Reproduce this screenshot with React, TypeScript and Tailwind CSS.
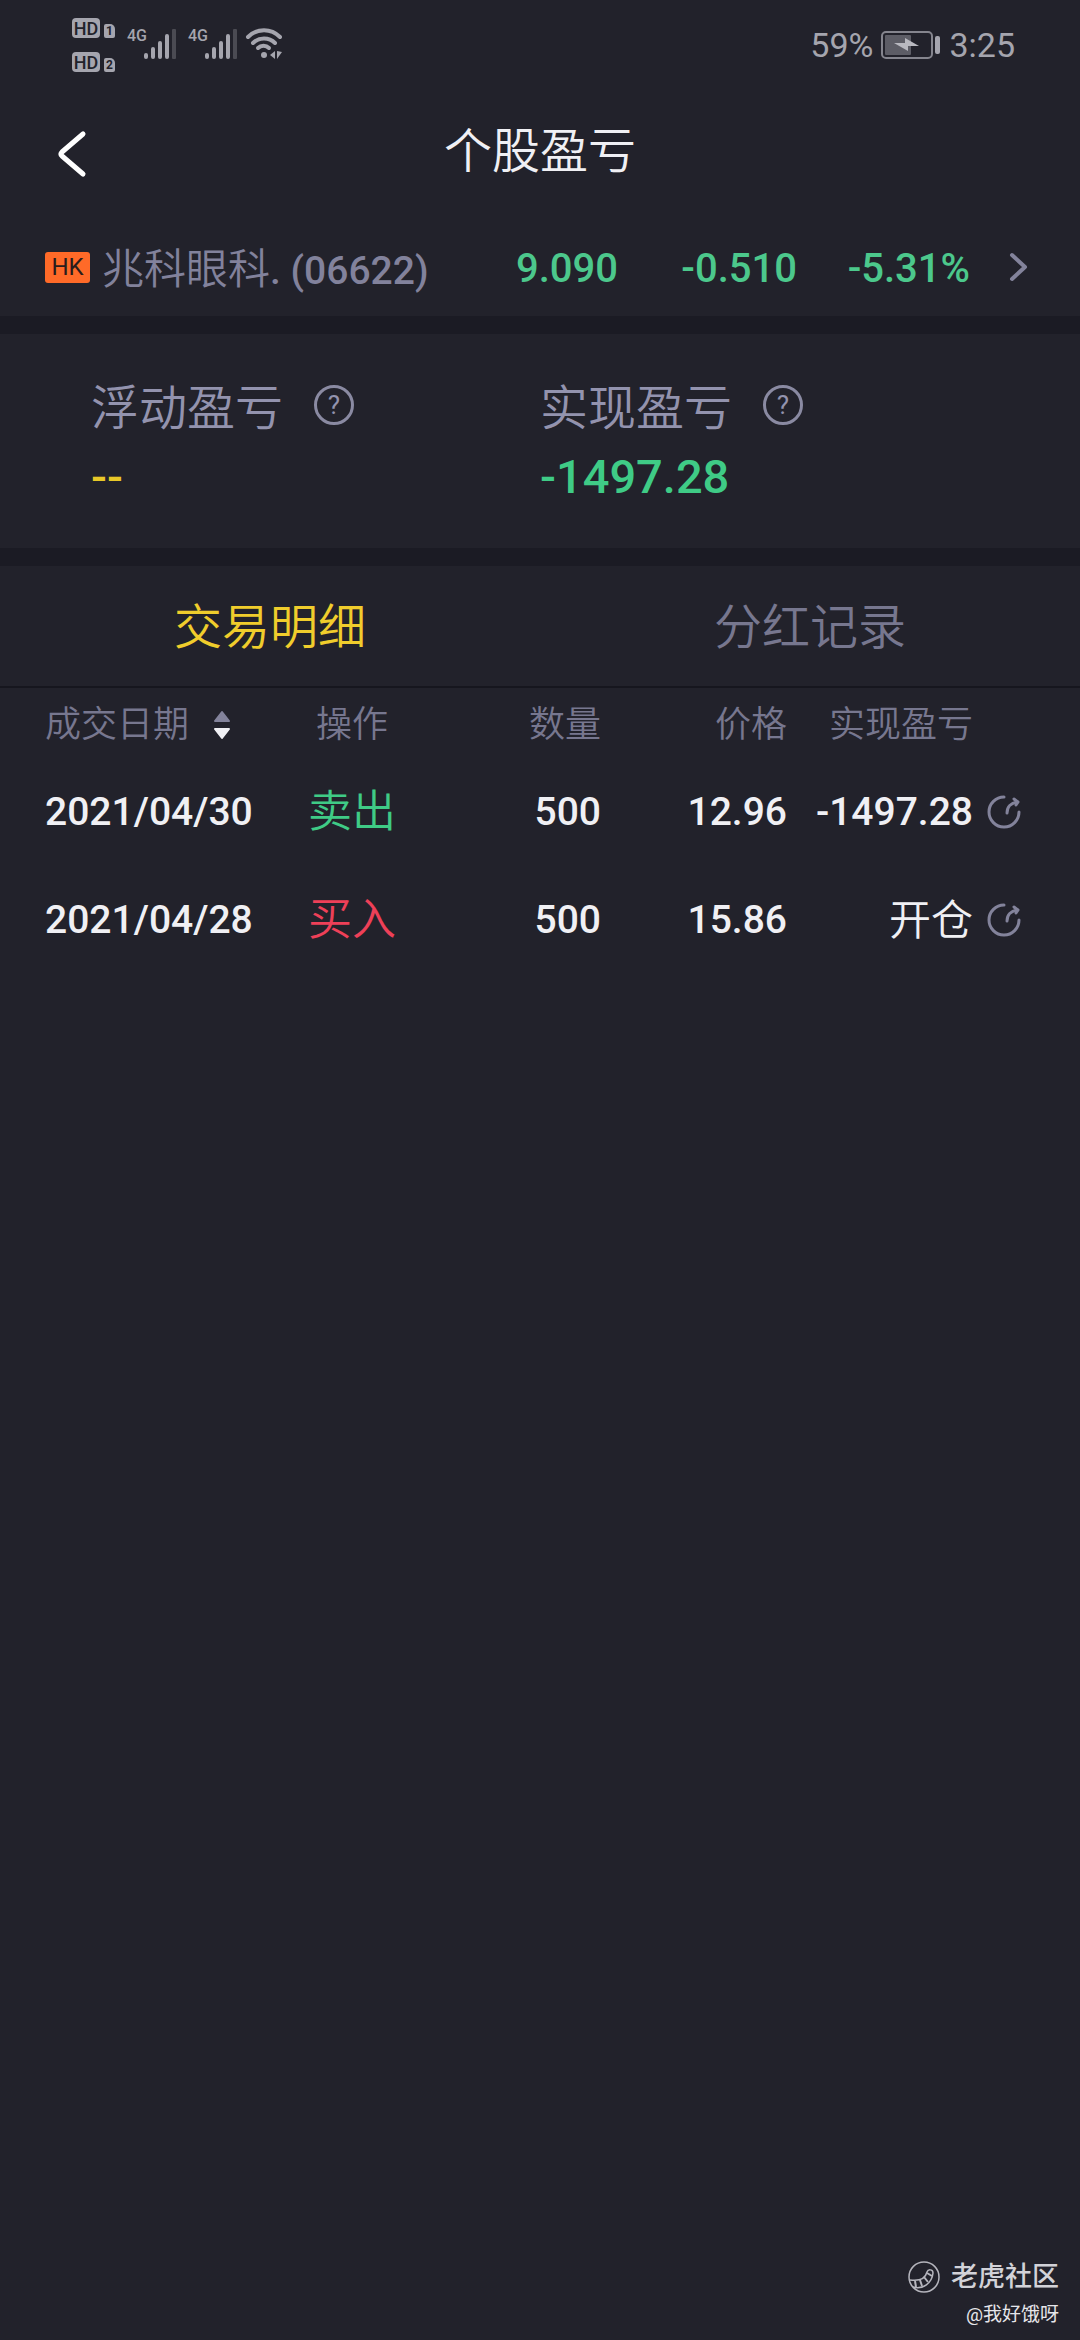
import { useState } from 'react';

type Trade = {
  date: string;
  side: 'buy' | 'sell';
  quantity: number;
  price: string;
  pnl: string;
};

const TRADES: Trade[] = [
  { date: '2021/04/30', side: 'sell', quantity: 500, price: '12.96', pnl: '-1497.28' },
  { date: '2021/04/28', side: 'buy', quantity: 500, price: '15.86', pnl: '开仓' },
];

const TABS = ['交易明细', '分红记录'];

function SimBadge({ slot }: { slot: number }) {
  return (
    <div className="flex items-end gap-1">
      <span className="flex h-5 w-7 items-center justify-center rounded-[4px] bg-[#a5a5ae] text-[18px] font-medium text-[#22222b]">
        HD
      </span>
      <span className="flex h-[14px] w-[11px] items-center justify-center rounded-[2px] rounded-tr-[5px] bg-[#a5a5ae] text-[12px] font-bold text-[#22222b]">
        {slot}
      </span>
    </div>
  );
}

function Signal() {
  return (
    <div className="flex items-start">
      <span className="w-[17px] text-[16px] leading-[16px] font-medium">4G</span>
      <svg className="h-[32px] w-[36px]" viewBox="0 0 36 32" fill="currentColor">
        <rect x="0" y="25" width="4" height="6" rx="2" />
        <rect x="7" y="19" width="4" height="12" rx="2" />
        <rect x="14" y="13" width="4" height="18" rx="2" />
        <rect x="21" y="6" width="4" height="25" rx="2" />
        <rect x="28" y="1" width="4" height="30" rx="1" fill="#4b4b53" />
      </svg>
    </div>
  );
}

function WifiIcon() {
  return (
    <svg className="h-[32px] w-[38px]" viewBox="0 0 38 32" fill="none" stroke="currentColor" strokeWidth="4" strokeLinecap="round">
      <path d="M3 9C12 0 26 0 35 9" />
      <path d="M8 15C14 9 24 9 30 15" />
      <path d="M13 20C16 17 21 17 24 20" />
      <circle cx="19" cy="27" r="3" fill="currentColor" stroke="none" />
      <path d="M30 23v8l-5-4zM32 31v-8l5 1z" fill="currentColor" stroke="none" />
    </svg>
  );
}

function BatteryIcon() {
  return (
    <svg className="h-[28px] w-[60px]" viewBox="0 0 60 28" fill="none">
      <rect x="1" y="1" width="50" height="26" rx="4" stroke="#85858e" strokeWidth="2" />
      <rect x="4" y="4" width="26" height="20" rx="1" fill="#5d5d66" />
      <path d="M13 12L24 12L24 7L38 15L27 15L27 20Z" fill="#b9b9c0" />
      <rect x="54" y="5" width="5" height="18" rx="2" fill="#a5a5ae" />
    </svg>
  );
}

function StatusBar() {
  return (
    <div className="flex h-[90px] items-start justify-between pr-[65px] pl-[72px] text-[#a5a5ae]">
      <div className="flex items-start pt-[18px]">
        <div className="flex w-[55px] flex-col gap-[14px]">
          <SimBadge slot={1} />
          <SimBadge slot={2} />
        </div>
        <div className="flex gap-2 pt-[10px]">
          <Signal />
          <Signal />
          <div className="-ml-1">
            <WifiIcon />
          </div>
        </div>
      </div>
      <div className="flex h-[90px] items-center gap-2 text-[34px]">
        <span>59%</span>
        <BatteryIcon />
        <span>3:25</span>
      </div>
    </div>
  );
}

function Stat({ label, value, valueClass }: { label: string; value: string; valueClass: string }) {
  return (
    <div>
      <div className="flex items-start gap-[31px] text-[48px] leading-[64px] font-[350] text-[#9393ae]">
        <span className="pt-1">{label}</span>
        <button
          type="button"
          aria-label={`${label}说明`}
          className="mt-3 flex size-[40px] items-center justify-center rounded-full border-[3px] border-[#8a8aa2] text-[26px] leading-none font-normal"
        >
          ?
        </button>
      </div>
      <div className={`mt-1 text-[47px] leading-[64px] font-medium ${valueClass}`}>{value}</div>
    </div>
  );
}

function ShareIcon() {
  return (
    <svg className="size-[34px]" viewBox="0 0 34 34" fill="none" stroke="#83839b" strokeWidth="3" strokeLinecap="round" strokeLinejoin="round">
      <path d="M17 2A15 15 0 1 0 32 17" />
      <path d="M20 18C20 12 24 8 30 7" />
      <path d="M27 4L31 7L29 10" />
    </svg>
  );
}

function TradeTable() {
  return (
    <table className="w-full table-fixed">
      <thead>
        <tr className="h-[70px] text-[36px] text-[#77778f]">
          <th className="pt-1 pl-[45px] text-left font-[350]">
            <button type="button" className="flex items-center gap-[24px]">
              成交日期
              <svg className="h-[30px] w-[18px]" viewBox="0 0 18 30" strokeWidth="2" strokeLinejoin="round">
                <path d="M9 2L16 11H2Z" fill="#83839b" stroke="#83839b" />
                <path d="M9 28L16 19H2Z" fill="#f0f0f4" stroke="#f0f0f4" />
              </svg>
            </button>
          </th>
          <th className="w-[176px] pt-1 text-center font-[350]">操作</th>
          <th className="w-[161px] pt-1 text-right font-[350]">数量</th>
          <th className="w-[186px] pt-1 text-right font-[350]">价格</th>
          <th className="w-[186px] pt-1 text-right font-[350]">实现盈亏</th>
          <th className="w-[107px]" />
        </tr>
      </thead>
      <tbody>
        {TRADES.map((trade) => (
          <tr key={trade.date} className="h-[108px] text-[39px] font-medium text-[#f0f0f4]">
            <td className="pl-[45px] whitespace-nowrap">{trade.date}</td>
            <td
              className={`text-center text-[44px] font-[350] ${
                trade.side === 'sell' ? 'text-[#3fcb86]' : 'text-[#ee4058]'
              }`}
            >
              {trade.side === 'sell' ? '卖出' : '买入'}
            </td>
            <td className="text-right">{trade.quantity}</td>
            <td className="text-right">{trade.price}</td>
            <td className={trade.pnl === '开仓' ? 'text-right text-[42px] font-[350]' : 'text-right'}>{trade.pnl}</td>
            <td className="pl-[14px]">
              <button type="button" aria-label="分享" className="block">
                <ShareIcon />
              </button>
            </td>
          </tr>
        ))}
      </tbody>
    </table>
  );
}

function Watermark() {
  return (
    <footer className="mt-auto flex flex-col items-end pr-[21px] pb-[11px]">
      <div className="flex items-center gap-[11px] text-[27px] leading-[36px] font-medium text-[#d2d2d8]">
        <svg className="size-[32px]" viewBox="0 0 32 32" fill="none" stroke="#b5b5bd" strokeWidth="1.5">
          <circle cx="16" cy="16" r="15" />
          <path d="M2 19C9 20 17 19 19 11C20 8 25 8 25 12C24 22 15 29 5 26" />
          <path d="M7 20L8 26M12 19L14 25M16 16L20 21M19 12L24 15" strokeWidth="2" />
        </svg>
        老虎社区
      </div>
      <div className="mt-[6px] text-[19px] leading-[28px] text-[#e6e6ea]">@我好饿呀</div>
    </footer>
  );
}

export default function App() {
  const [activeTab, setActiveTab] = useState(TABS[0]);

  return (
    <main className="flex min-h-screen flex-col bg-[#22222b] font-['Roboto','Noto_Sans_CJK_SC',sans-serif]">
      <StatusBar />

      <header className="grid h-[128px] grid-cols-[1fr_auto_1fr] items-center pl-[55px]">
        <button type="button" aria-label="返回" className="justify-self-start">
          <svg className="h-[48px] w-[34px]" viewBox="0 0 34 48" fill="none" stroke="#fff" strokeWidth="5" strokeLinecap="round" strokeLinejoin="round">
            <path d="M28 4L7 22Q5 24 7 26L28 44" />
          </svg>
        </button>
        <h1 className="pr-[55px] pb-1 text-[48px] leading-[64px] font-[350] text-[#f0f0f4]">个股盈亏</h1>
      </header>

      <a href="#quote" className="flex h-[98px] items-center pr-[51px] pl-[45px] text-[40px] font-medium text-[#4cc88c]">
        <span className="mr-3 flex h-[31px] w-[45px] items-center justify-center rounded-[3px] bg-[#ff6a28] text-[24px] font-normal text-[#2a1c1c]">
          HK
        </span>
        <span className="flex-1 pt-1 whitespace-nowrap text-[39px] text-[#82829c]">
          <span className="text-[42px] font-[350]">兆科眼科</span>. (06622)
        </span>
        <span className="pt-1 text-right">9.090</span>
        <span className="w-[179px] pt-1 text-right">-0.510</span>
        <span className="w-[173px] pt-1 text-right">-5.31%</span>
        <svg className="ml-[39px] h-[32px] w-[20px]" viewBox="0 0 20 32" fill="none" stroke="#83839b" strokeWidth="4" strokeLinecap="round" strokeLinejoin="round">
          <path d="M3 4L16 16L3 28" />
        </svg>
      </a>

      <section className="grid grid-cols-2 border-y-[18px] border-[#1b1b24] px-[91px] pt-[39px] pb-[39px]">
        <Stat label="浮动盈亏" value="--" valueClass="text-[#e8c828]" />
        <Stat label="实现盈亏" value="-1497.28" valueClass="text-[#3fcb86]" />
      </section>

      <div role="tablist" className="grid h-[122px] grid-cols-2 border-b-2 border-[#16161e]">
        {TABS.map((tab) => (
          <button
            key={tab}
            type="button"
            role="tab"
            aria-selected={tab === activeTab}
            onClick={() => setActiveTab(tab)}
            className={`pt-1 text-[48px] font-[350] ${tab === activeTab ? 'text-[#f0cd2c]' : 'text-[#77778f]'}`}
          >
            {tab}
          </button>
        ))}
      </div>

      {activeTab === TABS[0] && <TradeTable />}

      <Watermark />
    </main>
  );
}
